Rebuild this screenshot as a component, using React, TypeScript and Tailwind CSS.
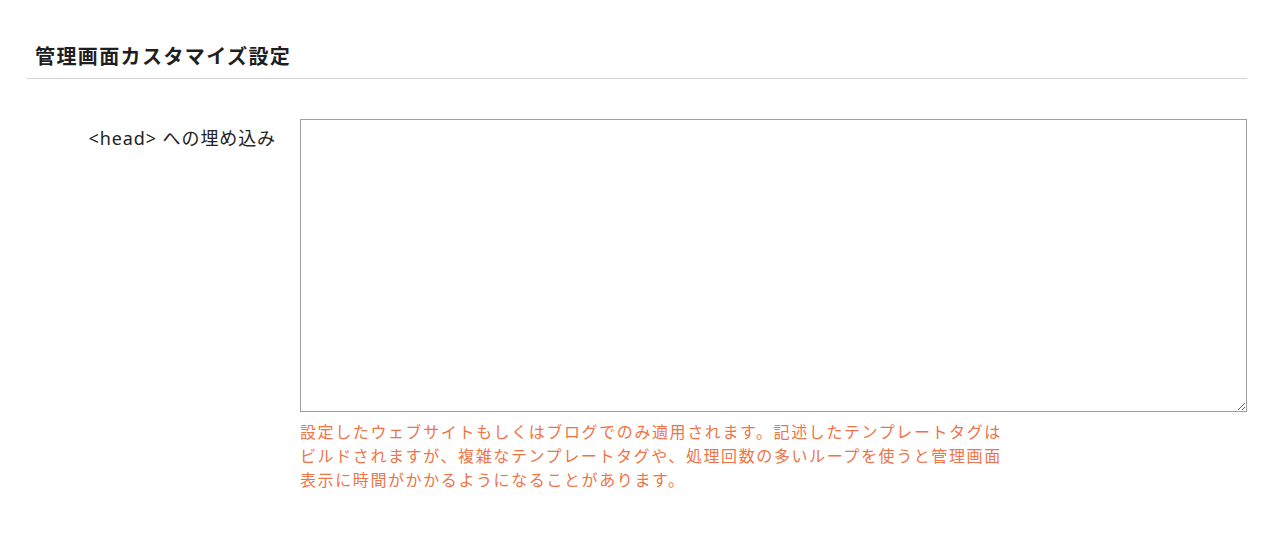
export default function App() {
  const font = { fontFamily: '"Noto Sans", "Noto Sans CJK JP", sans-serif' };
  return (
    <div className="min-h-[547px] bg-white pl-[27px] pr-[38px] pt-[42px]" style={font}>
      <h2 className="border-b border-[#d3d3d3] pb-[6px] pl-[8px] text-[20px] font-bold leading-[30px] tracking-[1.4px] text-[#1f1f1f]">
        管理画面カスタマイズ設定
      </h2>
      <div className="mt-[40px] flex gap-[24px]">
        <label className="w-[249px] shrink-0 pt-[6px] text-right text-[18px] leading-[26px] tracking-[0.9px] text-[#222]">
          &lt;head&gt; への埋め込み
        </label>
        <div className="flex-1">
          <textarea className="block h-[293px] w-full resize-y border border-[#a0a0a0] bg-white" />
          <p className="mt-[8px] text-[16px] leading-[24px] tracking-[1.6px] text-[#ee7448]">
            設定したウェブサイトもしくはブログでのみ適用されます。記述したテンプレートタグは
            <br />
            ビルドされますが、複雑なテンプレートタグや、処理回数の多いループを使うと管理画面
            <br />
            表示に時間がかかるようになることがあります。
          </p>
        </div>
      </div>
    </div>
  );
}
